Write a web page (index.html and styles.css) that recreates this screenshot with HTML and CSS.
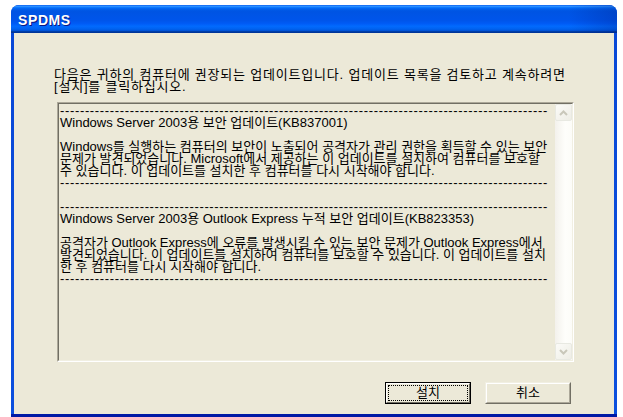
FILE: index.html
```html
<!DOCTYPE html>
<html lang="ko">
<head>
<meta charset="utf-8">
<title>SPDMS</title>
<link rel="stylesheet" href="styles.css">
</head>
<body>
<div class="window">
  <div class="titlebar"><span class="title">SPDMS</span></div>
  <div class="client">
    <p class="intro">다음은 귀하의 컴퓨터에 권장되는 업데이트입니다. 업데이트 목록을 검토하고 계속하려면<br>[설치]를 클릭하십시오.</p>
    <div class="listbox">
      <div class="listbox-inner">
        <div class="list-text">
          <div class="rule">--------------------------------------------------------------------------------------------------</div>
          <div class="line">Windows Server 2003용 보안 업데이트(KB837001)</div>
          <div class="line">&nbsp;</div>
          <div class="line">Windows를 실행하는 컴퓨터의 보안이 노출되어 공격자가 관리 권한을 획득할 수 있는 보안</div>
          <div class="line">문제가 발견되었습니다. Microsoft에서 제공하는 이 업데이트를 설치하여 컴퓨터를 보호할</div>
          <div class="line">수 있습니다. 이 업데이트를 설치한 후 컴퓨터를 다시 시작해야 합니다.</div>
          <div class="rule">--------------------------------------------------------------------------------------------------</div>
          <div class="line">&nbsp;</div>
          <div class="rule">--------------------------------------------------------------------------------------------------</div>
          <div class="line">Windows Server 2003용 Outlook Express 누적 보안 업데이트(KB823353)</div>
          <div class="line">&nbsp;</div>
          <div class="line">공격자가 Outlook Express에 오류를 발생시킬 수 있는 보안 문제가 Outlook Express에서</div>
          <div class="line">발견되었습니다. 이 업데이트를 설치하여 컴퓨터를 보호할 수 있습니다. 이 업데이트를 설치</div>
          <div class="line">한 후 컴퓨터를 다시 시작해야 합니다.</div>
          <div class="rule">--------------------------------------------------------------------------------------------------</div>
        </div>
        <div class="scrollbar">
          <div class="sb-btn">
            <svg width="9" height="6" viewBox="0 0 9 6"><polyline points="1,5 4.5,1.5 8,5" fill="none" stroke="#c9c7ba" stroke-width="2"/></svg>
          </div>
          <div class="sb-track"></div>
          <div class="sb-btn">
            <svg width="9" height="6" viewBox="0 0 9 6"><polyline points="1,1 4.5,4.5 8,1" fill="none" stroke="#c9c7ba" stroke-width="2"/></svg>
          </div>
        </div>
      </div>
    </div>
    <div class="buttons">
      <button class="btn btn-default"><span class="btn-face"><span class="focus">설치</span></span></button>
      <button class="btn"><span class="btn-face">취소</span></button>
    </div>
  </div>
</div>
</body>
</html>
```
FILE: styles.css
```css
* {
  box-sizing: border-box;
}

html,
body {
  margin: 0;
  padding: 0;
}

body {
  width: 623px;
  height: 417px;
  overflow: hidden;
  background: #fff;
  font-family: "Liberation Sans", "Noto Sans CJK KR", sans-serif;
  font-size: 13px;
  line-height: 12px;
  color: #000;
}

/* Luna window frame */
.window {
  margin: 5px 0 0 11px;
  width: 606px;
  height: 412px;
  display: flex;
  flex-direction: column;
  border-radius: 8px 8px 0 0;
  overflow: hidden;
  background: linear-gradient(to top, #0019a5 0, #0019a5 3px, #0b4fde 3px, #0847d6 100%);
}

.titlebar {
  flex: none;
  height: 28px;
  display: flex;
  align-items: center;
  padding: 1px 0 0 7px;
  background:
    linear-gradient(to right, rgba(0, 20, 120, 0) 92%, rgba(0, 20, 120, 0.25) 100%),
    linear-gradient(to bottom,
      #0058ee 0%, #3593ff 4%, #288eff 6%, #127dff 8%, #036ffc 10%,
      #0262ee 14%, #0057e5 20%, #0054e3 24%, #0055eb 56%, #005bf5 66%,
      #026afe 76%, #0062ef 86%, #0052d6 92%, #0040ab 94%, #003092 100%);
}

.title {
  font-family: "Liberation Sans", sans-serif;
  font-weight: bold;
  font-size: 14px;
  line-height: 16px;
  color: #fff;
  letter-spacing: 0.6px;
  text-shadow: 1px 1px #0a1883;
}

.client {
  flex: 1;
  margin: 0 3px 3px;
  background: #ece9d8;
  padding: 36px 40px 0 40px;
  display: flex;
  flex-direction: column;
}

.intro {
  margin: 0;
  white-space: nowrap;
  letter-spacing: 0.8px;
}

/* read-only multiline edit, classic sunken border */
.listbox {
  margin: 9px 0 0 3px;
  width: 517px;
  height: 260px;
  border: 1px solid;
  border-color: #aca899 #fff #fff #aca899;
}

.listbox-inner {
  height: 100%;
  display: flex;
  border: 1px solid;
  border-color: #716f64 #f1efe2 #f1efe2 #716f64;
}

.list-text {
  flex: 1;
  padding: 1px 0 0 1px;
  white-space: nowrap;
  overflow: hidden;
}

.line,
.rule {
  height: 12px;
}

.rule {
  letter-spacing: 0.65px;
}

/* disabled scrollbar */
.scrollbar {
  flex: none;
  width: 17px;
  display: flex;
  flex-direction: column;
  background: linear-gradient(to right, #f3f1ec, #fefefb 60%, #fcfcf8);
}

.sb-btn {
  flex: none;
  height: 17px;
  display: flex;
  align-items: center;
  justify-content: center;
  border: 1px solid #e8e9e2;
  border-radius: 2px;
  background: linear-gradient(to bottom right, #fbfbf8, #eeede5);
}

.sb-track {
  flex: 1;
}

.buttons {
  margin-top: 20px;
  padding-right: 3px;
  display: flex;
  justify-content: flex-end;
  gap: 14px;
}

/* classic 3D push buttons */
.btn {
  width: 86px;
  height: 22px;
  padding: 0;
  margin: 0;
  font: inherit;
  color: #000;
  background: #ece9d8;
  border: 1px solid;
  border-color: #f1efe2 #716f64 #716f64 #f1efe2;
}

.btn-face {
  display: flex;
  align-items: center;
  justify-content: center;
  height: 100%;
  border: 1px solid;
  border-color: #fff #aca899 #aca899 #fff;
}

.btn-default {
  border-color: #000;
}

.btn-default .btn-face {
  border-color: #fff #716f64 #716f64 #fff;
  padding: 1px;
}

.focus {
  display: flex;
  align-items: center;
  justify-content: center;
  width: 100%;
  height: 100%;
  border: 1px dotted #000;
}
```
